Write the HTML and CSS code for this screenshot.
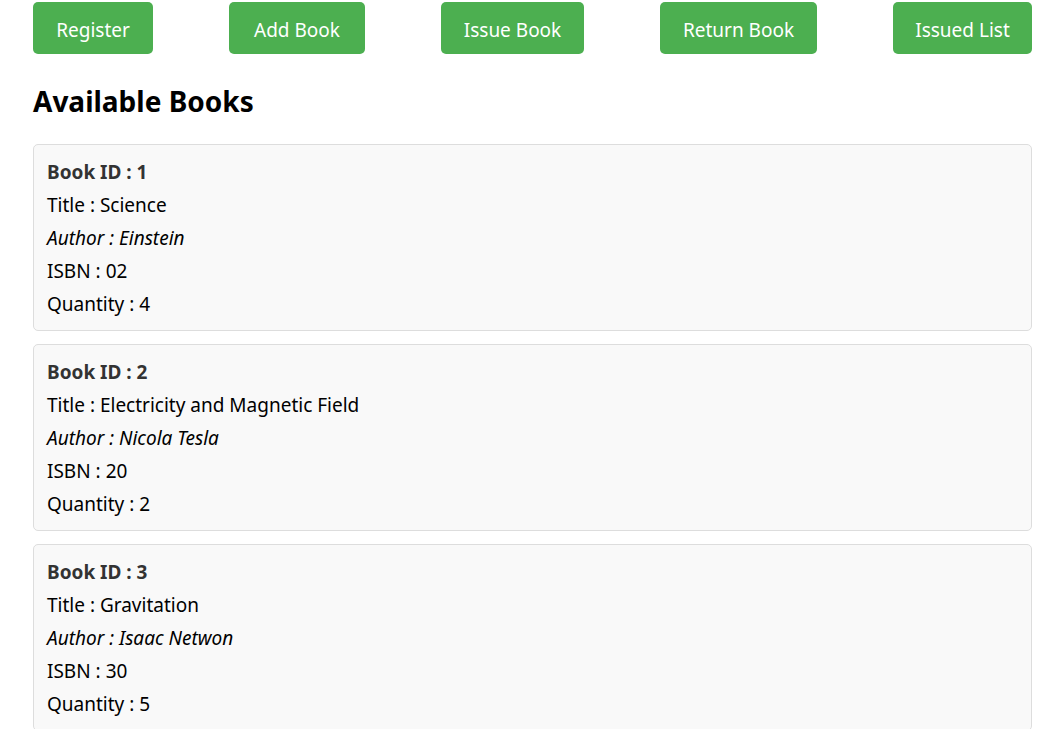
FILE: index.html
```html
<!DOCTYPE html>
<html>
<head>
<meta charset="utf-8">
<link rel="stylesheet" href="styles.css">
</head>
<body>
<div class="page">
  <nav class="nav">
    <button class="btn btn-register">Register</button>
    <button class="btn btn-add">Add Book</button>
    <button class="btn btn-issue">Issue Book</button>
    <button class="btn btn-return">Return Book</button>
    <button class="btn btn-list">Issued List</button>
  </nav>
  <h2 class="heading">Available Books</h2>
  <div class="list">
    <div class="card">
      <div class="line id">Book ID : 1</div>
      <div class="line">Title : Science</div>
      <div class="line author">Author : Einstein</div>
      <div class="line">ISBN : 02</div>
      <div class="line">Quantity : 4</div>
    </div>
    <div class="card">
      <div class="line id">Book ID : 2</div>
      <div class="line">Title : Electricity and Magnetic Field</div>
      <div class="line author">Author : Nicola Tesla</div>
      <div class="line">ISBN : 20</div>
      <div class="line">Quantity : 2</div>
    </div>
    <div class="card">
      <div class="line id">Book ID : 3</div>
      <div class="line">Title : Gravitation</div>
      <div class="line author">Author : Isaac Netwon</div>
      <div class="line">ISBN : 30</div>
      <div class="line">Quantity : 5</div>
    </div>
  </div>
</div>
</body>
</html>
```

FILE: styles.css
```css
html, body {
  margin: 0;
  padding: 0;
  background: #fff;
}
body {
  font-family: "Noto Sans", "Open Sans", sans-serif;
  color: #000;
  overflow: hidden;
}
.page {
  width: 999px;
  margin-left: 33px;
  padding-top: 2px;
}
.nav {
  display: flex;
  justify-content: space-between;
}
.btn {
  background: #4caf50;
  color: #fff;
  border: none;
  border-radius: 5px;
  font-family: inherit;
  font-size: 19px;
  height: 52px;
  padding: 3px 0 0;
  box-sizing: border-box;
  text-align: center;
  cursor: pointer;
}
.btn-register { width: 120px; }
.btn-add { width: 136px; }
.btn-issue { width: 143px; }
.btn-return { width: 157px; }
.btn-list { width: 139px; }
.heading {
  font-size: 28px;
  font-weight: bold;
  margin: 28px 0 24px;
  line-height: 38px;
}
.list {
  display: flex;
  flex-direction: column;
  gap: 13px;
}
.card {
  background: #f9f9f9;
  border: 1px solid #ddd;
  border-radius: 5px;
  padding: 11px 13px 9px;
  height: 187px;
  box-sizing: border-box;
}
.line {
  font-size: 19px;
  line-height: 33px;
}
.id {
  font-weight: bold;
  color: #333;
}
.author {
  font-style: italic;
}
```
